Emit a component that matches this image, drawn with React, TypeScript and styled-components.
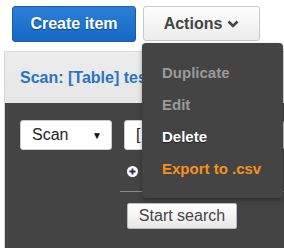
import React from "react";
import styled, { createGlobalStyle } from "styled-components";

const Global = createGlobalStyle`
  html, body { margin: 0; padding: 0; background: #fff; }
  body { font-family: "Liberation Sans", Arial, sans-serif; width: 284px; height: 252px; overflow: hidden; }
`;

const Page = styled.div`
  position: relative;
  width: 284px;
  height: 252px;
  background: #fff;
  overflow: hidden;
`;

const Toolbar = styled.div`
  display: flex;
  align-items: flex-start;
  gap: 7px;
  padding: 6px 0 0 12px;
  height: 51px;
  box-sizing: border-box;
`;

const PrimaryButton = styled.button`
  width: 124px;
  height: 36px;
  border: 1px solid #1a5ea8;
  border-radius: 3px;
  background: linear-gradient(#2b7fd6, #1669c4);
  color: #fff;
  font: bold 16px "Liberation Sans", Arial, sans-serif;
  text-shadow: 0 1px 1px rgba(0,0,0,0.4);
  padding: 0;
`;

const ActionsWrap = styled.div`
  position: relative;
`;

const SecondaryButton = styled.button`
  width: 117px;
  height: 35px;
  border: 1px solid #c8c8c8;
  border-radius: 3px;
  background: linear-gradient(#fdfdfd, #ececec);
  color: #444;
  font: bold 16px "Liberation Sans", Arial, sans-serif;
  display: flex;
  align-items: center;
  justify-content: center;
  gap: 5px;
  padding: 0;
`;

const Menu = styled.ul`
  position: absolute;
  top: 37px;
  left: -1px;
  width: 141px;
  height: 155px;
  margin: 0;
  padding: 14px 0 0 0;
  box-sizing: border-box;
  list-style: none;
  background: #444;
  border-radius: 4px;
  box-shadow: 0 2px 4px rgba(0,0,0,0.35);
  z-index: 5;
`;

const MenuItem = styled.li<{ $tone: "muted" | "normal" | "accent" }>`
  height: 32px;
  padding-left: 20px;
  font: bold 15px/32px "Liberation Sans", Arial, sans-serif;
  color: ${(p) => (p.$tone === "muted" ? "#9a9a9a" : p.$tone === "accent" ? "#f7901e" : "#fff")};
  text-shadow: ${(p) => (p.$tone === "normal" ? "0 1px 1px rgba(0,0,0,0.6)" : "none")};
`;

const Panel = styled.div`
  margin-left: 4px;
  border-left: 1px solid #d5d5d5;
  height: 197px;
  display: flex;
  flex-direction: column;
`;

const PanelHeader = styled.div`
  height: 52px;
  flex-shrink: 0;
  background: linear-gradient(#ececec, #e6e6e6);
  border-top: 1px solid #dcdcdc;
  box-sizing: border-box;
  display: flex;
  align-items: center;
  padding-left: 15px;
`;

const HeaderTitle = styled.span`
  display: block;
  width: 122px;
  overflow: hidden;
  white-space: nowrap;
  font: bold 16px "Liberation Sans", Arial, sans-serif;
  color: #2a74c0;
`;

const PanelBody = styled.div`
  flex: 1;
  background: #444;
  display: flex;
  gap: 12px;
  padding: 17px 0 0 15px;
`;

const SelectBox = styled.div`
  width: 92px;
  height: 30px;
  box-sizing: border-box;
  background: #fff;
  border: 1px solid #ccc;
  border-radius: 3px;
  display: flex;
  align-items: center;
  justify-content: space-between;
  padding: 0 9px 0 11px;
  font: 16px "Liberation Sans", Arial, sans-serif;
  color: #222;
`;

const Caret = styled.span`
  font-size: 10px;
  color: #111;
`;

const Column = styled.div`
  display: flex;
  flex-direction: column;
  flex: 1;
`;

const TextInput = styled.div`
  height: 30px;
  box-sizing: border-box;
  background: #fff;
  border: 1px solid #ccc;
  border-radius: 3px;
  display: flex;
  align-items: center;
  padding-left: 11px;
  font: 16px "Liberation Sans", Arial, sans-serif;
  color: #222;
`;

const AddRow = styled.div`
  height: 26px;
  display: flex;
  align-items: center;
  padding: 8px 0 0 3px;
`;

const Divider = styled.div`
  height: 1px;
  background: #8a8a8a;
  margin: 7px 0 0 -4px;
`;

const StartButton = styled.button`
  align-self: flex-start;
  margin: 11px 0 0 3px;
  width: 110px;
  height: 26px;
  border: 1px solid #bbb;
  border-radius: 2px;
  background: linear-gradient(#ffffff, #e8e8e8);
  color: #444;
  font: 16px "Liberation Sans", Arial, sans-serif;
  padding: 0;
`;

export default function App() {
  return (
    <>
      <Global />
      <Page>
        <Toolbar>
          <PrimaryButton>Create item</PrimaryButton>
          <ActionsWrap>
            <SecondaryButton>
              Actions
              <svg width="12" height="10" viewBox="0 0 12 10">
                <path d="M1.5 2.5 L6 7 L10.5 2.5" fill="none" stroke="#444" strokeWidth="2.6" />
              </svg>
            </SecondaryButton>
            <Menu>
              <MenuItem $tone="muted">Duplicate</MenuItem>
              <MenuItem $tone="muted">Edit</MenuItem>
              <MenuItem $tone="normal">Delete</MenuItem>
              <MenuItem $tone="accent">Export to .csv</MenuItem>
            </Menu>
          </ActionsWrap>
        </Toolbar>
        <Panel>
          <PanelHeader>
            <HeaderTitle>Scan: [Table] test-table: id</HeaderTitle>
          </PanelHeader>
          <PanelBody>
            <SelectBox>
              Scan
              <Caret>▼</Caret>
            </SelectBox>
            <Column>
              <TextInput>[</TextInput>
              <AddRow>
                <svg width="11" height="11" viewBox="0 0 11 11">
                  <circle cx="5.5" cy="5.5" r="5.5" fill="#fff" />
                  <path d="M5.5 2.5 V8.5 M2.5 5.5 H8.5" stroke="#1d2f6b" strokeWidth="1.8" />
                </svg>
              </AddRow>
              <Divider />
              <StartButton>Start search</StartButton>
            </Column>
          </PanelBody>
        </Panel>
      </Page>
    </>
  );
}
